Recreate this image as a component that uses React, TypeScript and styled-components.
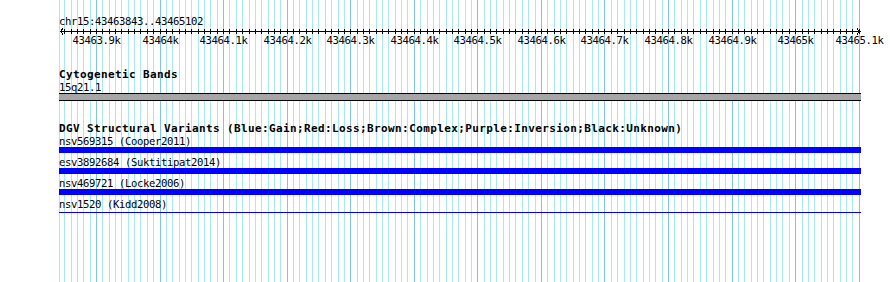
import React from 'react';
import styled, {createGlobalStyle} from 'styled-components';

const START = 43463843;
const END = 43465102;
const ORIGIN = 59.77;
const SCALE = 0.6356; // px per bp
const TRACK_WIDTH = 802;

const toX = (bp: number) => Math.round(ORIGIN + (bp - START) * SCALE);

const minorTicks: number[] = [];
for(let bp = 43463850; bp <= 43465100; bp += 10) minorTicks.push(bp);
const majorTicks = minorTicks.filter(bp => bp % 100 === 0);

const variants = [
	{id: 'nsv569315', study: 'Cooper2011', last: false},
	{id: 'esv3892684', study: 'Suktitipat2014', last: false},
	{id: 'nsv469721', study: 'Locke2006', last: false},
	{id: 'nsv1520', study: 'Kidd2008', last: true},
];

const GlobalStyle = createGlobalStyle`
  html, body {
    margin: 0;
    background: #fff;
  }
  body {
    font-family: "DejaVu Sans Mono", "Liberation Mono", monospace;
    font-size: 10.6px;
    letter-spacing: -0.38px;
    color: #000;
  }
`;

const Page = styled.div`
  position: relative;
  width: 890px;
  height: 282px;
  overflow: hidden;
  background: #fff;
`;
const GridLayer = styled.svg`
  position: absolute;
  left: 0;
  top: 0;
  z-index: 0;
`;
const Content = styled.div`
  position: relative;
  z-index: 1;
  padding-left: 59px;
  width: ${TRACK_WIDTH}px;
`;
const RulerSection = styled.div`
  padding-top: 15px;
`;
const Plain = styled.div`
  line-height: 12px;
  height: 12px;
  white-space: nowrap;
`;
const TickLabels = styled.div`
  position: relative;
  height: 10px;
  line-height: 10px;
`;
const TickLabel = styled.span`
  position: absolute;
  top: 0;
  transform: translateX(-50%);
  white-space: nowrap;
`;
const Track = styled.div<{ $gap: number }>`
  margin-top: ${p => p.$gap}px;
`;
const TrackTitle = styled.div`
  font-size: 11px;
  font-weight: bold;
  letter-spacing: 0.38px;
  line-height: 12px;
  height: 12px;
  white-space: nowrap;
`;
const BandBar = styled.div`
  height: 6px;
  background: #a6a6a6;
  border-top: 1px solid #000;
  border-bottom: 1px solid #000;
`;
const VariantRow = styled.div`
  display: flex;
  flex-direction: column;
`;
const VariantBar = styled.div<{ $thin: boolean }>`
  margin-top: ${p => p.$thin ? 2 : 0}px;
  margin-bottom: ${p => p.$thin ? 0 : 3}px;
  height: ${p => p.$thin ? 1 : 6}px;
  background: ${p => p.$thin ? '#0000dd' : '#0000ff'};
`;

function Grid() {
	return (
		<GridLayer width={890} height={282} shapeRendering="crispEdges">
			<rect x={59} y={0} width={1} height={282} fill="#a8e8f0"/>
			{minorTicks.map(bp =>
				<rect key={bp} x={toX(bp)} y={0} width={1} height={282}
							fill={bp % 100 === 0 ? '#80c4ec' : '#a8e8f0'}/>
			)}
		</GridLayer>
	);
}

function Axis() {
	const end = toX(END) + 1;
	return (
		<svg width={TRACK_WIDTH} height={8} shapeRendering="crispEdges" style={{display: 'block'}}>
			<rect x={1} y={4} width={end - 60} height={1} fill="#000"/>
			{minorTicks.map(bp =>
				<rect key={bp} x={toX(bp) - 59} y={2} width={1} height={5} fill="#000"/>
			)}
			<polyline points="4,1.5 1.5,4.5 4,7.5" fill="none" stroke="#000" strokeWidth={1}/>
			<polyline points={`${end - 63},1.5 ${end - 60.5},4.5 ${end - 63},7.5`} fill="none" stroke="#000" strokeWidth={1}/>
		</svg>
	);
}

function App() {
	return (
		<Page>
			<GlobalStyle/>
			<Grid/>
			<Content>
				<RulerSection>
					<Plain>chr15:{START}..{END}</Plain>
					<Axis/>
					<TickLabels>
						{majorTicks.map(bp =>
							<TickLabel key={bp} style={{left: toX(bp) - 59 + 0.5}}>{bp / 1000}k</TickLabel>
						)}
					</TickLabels>
				</RulerSection>
				<Track $gap={24}>
					<TrackTitle>Cytogenetic Bands</TrackTitle>
					<Plain>15q21.1</Plain>
					<BandBar/>
				</Track>
				<Track $gap={22}>
					<TrackTitle>DGV Structural Variants (Blue:Gain;Red:Loss;Brown:Complex;Purple:Inversion;Black:Unknown)</TrackTitle>
					{variants.map(v =>
						<VariantRow key={v.id}>
							<Plain>{v.id} ({v.study})</Plain>
							<VariantBar $thin={v.last}/>
						</VariantRow>
					)}
				</Track>
			</Content>
		</Page>
	);
}

export default App;
